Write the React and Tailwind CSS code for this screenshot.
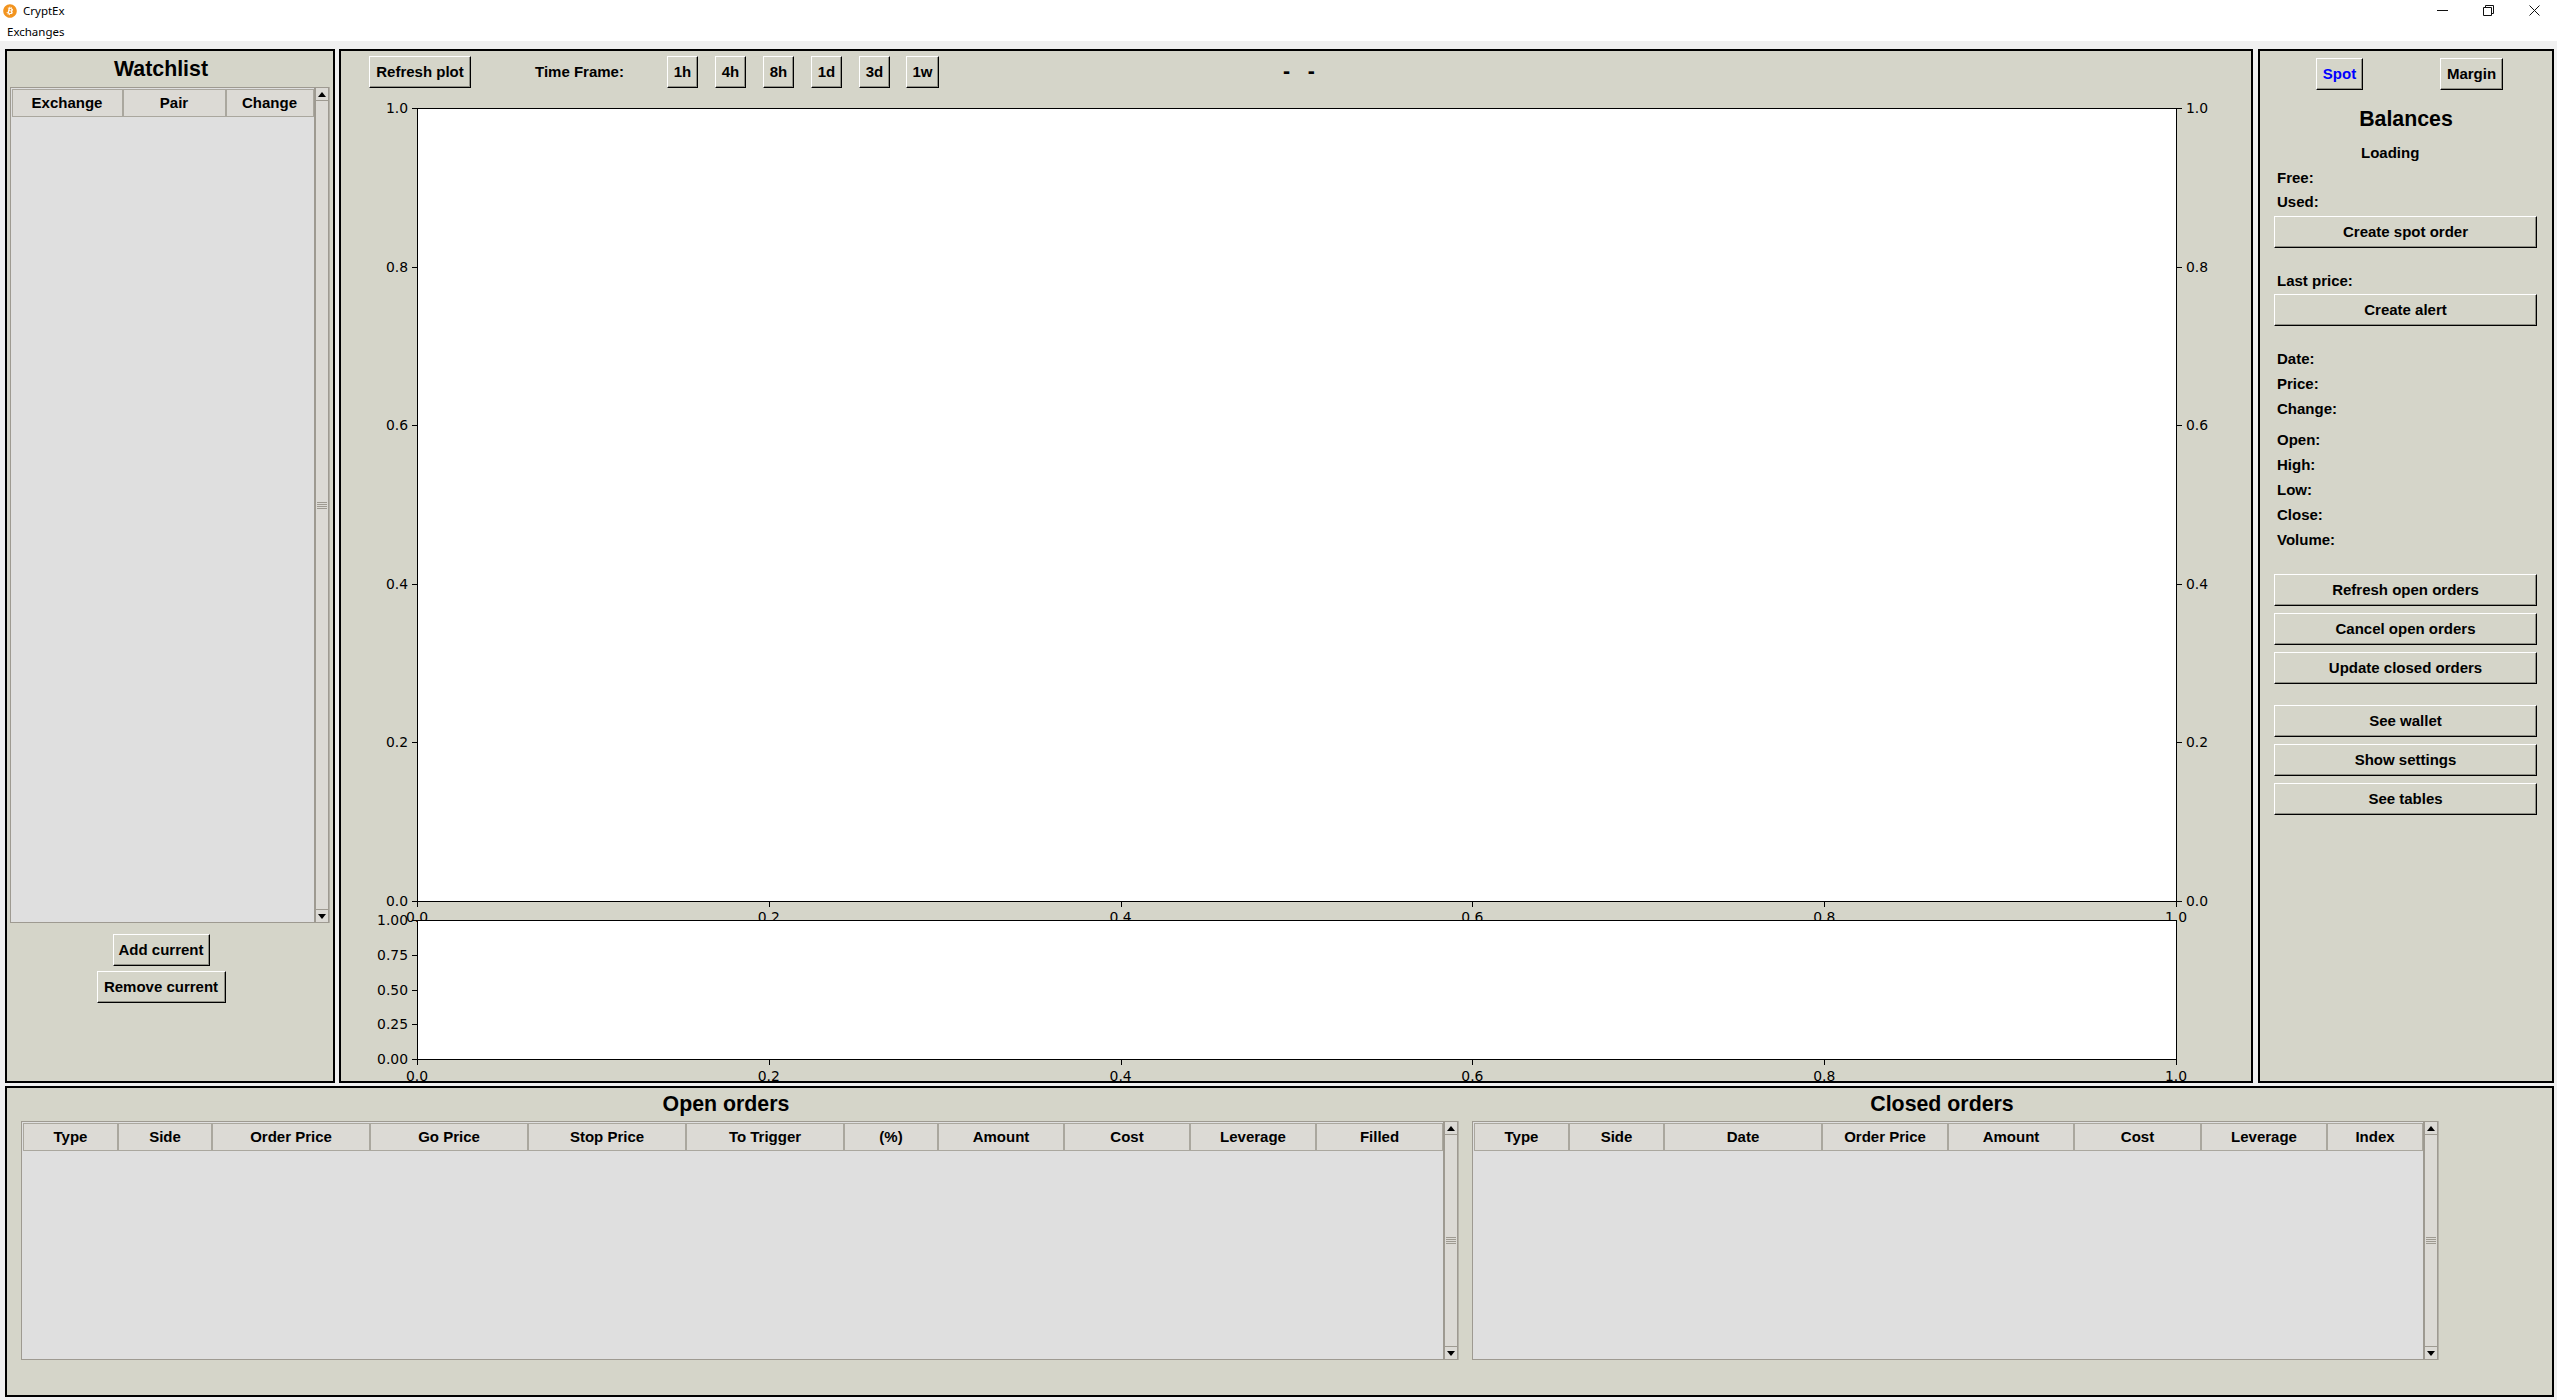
import React from 'react';
import { FaBitcoin } from 'react-icons/fa';

const xTicks = ['0.0', '0.2', '0.4', '0.6', '0.8', '1.0'];
const AX_L = 76;
const AX_R = 1835;
const P1_T = 16;
const P1_B = 809;
const P2_T = 828;
const P2_B = 967;

const openCols = [
  ['Type', 95], ['Side', 94], ['Order Price', 158], ['Go Price', 158], ['Stop Price', 158],
  ['To Trigger', 158], ['(%)', 94], ['Amount', 126], ['Cost', 126], ['Leverage', 126], ['Filled', 127],
];
const closedCols = [
  ['Type', 95], ['Side', 95], ['Date', 158], ['Order Price', 126], ['Amount', 126],
  ['Cost', 127], ['Leverage', 126], ['Index', 96],
];
const watchCols = [['Exchange', 111], ['Pair', 103], ['Change', 88]];

const Btn = ({ children, className = '' }) => (
  <button className={`flex items-center justify-center h-[32px] whitespace-nowrap bg-[#d5d5c9] border border-t-white border-l-white border-r-black border-b-black shadow-[inset_-1px_-1px_0_#8f8f85] font-bold text-[15px] text-black ${className}`}>
    {children}
  </button>
);

const Row = ({ children, className = 'h-[25px]' }) => (
  <div className={`flex items-center pl-[17px] font-bold text-[15px] text-black ${className}`}>{children}</div>
);

const Arrow = ({ up }) => (
  <div className="flex items-center justify-center w-[14px] h-[14px] shrink-0 bg-[#dcdad5] border border-[#9e9a91]">
    <svg width="8" height="5" viewBox="0 0 8 5">
      <path d={up ? 'M4 0 L8 5 L0 5 Z' : 'M0 0 L8 0 L4 5 Z'} fill="#000" />
    </svg>
  </div>
);

const Scrollbar = () => (
  <div className="flex flex-col w-[15px] shrink-0 bg-[#dcdad5] border-r border-[#b4b1a8]">
    <Arrow up />
    <div className="flex-1 flex flex-col justify-center items-center gap-[1px] border-x border-[#9e9a91] bg-[#dcdad5]">
      <div className="w-[10px] h-[1px] bg-[#9e9a91]" />
      <div className="w-[10px] h-[1px] bg-[#9e9a91]" />
      <div className="w-[10px] h-[1px] bg-[#9e9a91]" />
      <div className="w-[10px] h-[1px] bg-[#9e9a91]" />
    </div>
    <Arrow />
  </div>
);

const Tree = ({ cols, className = '' }) => (
  <div className={`flex ${className}`}>
    <div className="flex-1 bg-[#dfdfdf] border border-[#9e9a91] pt-[1px] pl-[1px]">
      <div className="flex h-[28px]">
        {cols.map(([name, w]) => (
          <div
            key={name}
            style={{ width: w }}
            className="flex items-center justify-center shrink-0 bg-[#dcdad5] border border-[#aaa79e] font-bold text-[15px] text-black"
          >
            {name}
          </div>
        ))}
      </div>
    </div>
    <Scrollbar />
  </div>
);

const Chart = () => (
  <svg width="1910" height="989" className="block font-['DejaVu_Sans'] text-[13.9px]">
    {/* main plot */}
    <rect x={AX_L + 0.5} y={P1_T + 0.5} width={AX_R - AX_L} height={P1_B - P1_T} fill="#fff" stroke="#000" />
    {xTicks.map((t, i) => {
      const y = P1_B - (i * (P1_B - P1_T)) / 5;
      const ty = Math.round(y) + 0.5;
      return (
        <g key={t}>
          <path d={`M${AX_L - 5} ${ty} H${AX_L} M${AX_R} ${ty} H${AX_R + 6}`} stroke="#000" />
          <text x={AX_L - 9} y={y + 5} textAnchor="end">{t}</text>
          <text x={AX_R + 10} y={y + 5}>{t}</text>
        </g>
      );
    })}
    {xTicks.map((t, i) => {
      const x = AX_L + (i * (AX_R - AX_L)) / 5;
      return (
        <g key={t}>
          <path d={`M${Math.round(x) + 0.5} ${P1_B} v6`} stroke="#000" />
          <text x={x} y={P1_B + 21} textAnchor="middle">{t}</text>
        </g>
      );
    })}
    {/* volume plot */}
    <rect x={AX_L + 0.5} y={P2_T + 0.5} width={AX_R - AX_L} height={P2_B - P2_T} fill="#fff" stroke="#000" />
    {['0.00', '0.25', '0.50', '0.75', '1.00'].map((t, i) => {
      const y = P2_B - (i * (P2_B - P2_T)) / 4;
      return (
        <g key={t}>
          <path d={`M${AX_L - 5} ${Math.round(y) + 0.5} H${AX_L}`} stroke="#000" />
          <text x={AX_L - 9} y={y + 5} textAnchor="end">{t}</text>
        </g>
      );
    })}
    {xTicks.map((t, i) => {
      const x = AX_L + (i * (AX_R - AX_L)) / 5;
      return (
        <g key={t}>
          <path d={`M${Math.round(x) + 0.5} ${P2_B} v6`} stroke="#000" />
          <text x={x} y={P2_B + 22} textAnchor="middle">{t}</text>
        </g>
      );
    })}
  </svg>
);

export default function App() {
  return (
    <div className="flex flex-col h-[1400px] w-full overflow-hidden bg-[#f0f0f0] font-['Liberation_Sans',Arial,sans-serif] text-black">
      {/* Title bar */}
      <div className="flex items-center h-[22px] bg-white pl-[3px] font-['Noto_Sans',sans-serif] text-[11.5px]">
        <FaBitcoin className="w-[14px] h-[14px] text-[#f2941f]" />
        <span className="ml-[6px]">CryptEx</span>
        <div className="ml-auto flex items-center gap-[35px] pr-[17px] mb-[2px]">
          <svg width="11" height="11" viewBox="0 0 11 11"><path d="M0 5.5 H11" stroke="#111" /></svg>
          <svg width="11" height="11" viewBox="0 0 11 11" fill="none" stroke="#111"><path d="M0.5 2.5 H8.5 V10.5 H0.5 Z M2.5 2.5 V0.5 H10.5 V8.5 H8.5" /></svg>
          <svg width="11" height="11" viewBox="0 0 11 11" stroke="#111"><path d="M0.5 0.5 L10.5 10.5 M10.5 0.5 L0.5 10.5" /></svg>
        </div>
      </div>
      {/* Menu */}
      <div className="flex items-center h-[19px] bg-white pl-[7px] pt-[1px] font-['Noto_Sans',sans-serif] text-[11.5px]">Exchanges</div>

      <div className="flex flex-col gap-[3px] pt-[8px] pl-[5px]">
        <div className="flex h-[1034px]">
          {/* Watchlist */}
          <div className="flex flex-col items-center w-[330px] bg-[#d5d5c9] border-2 border-black">
            <div className="flex items-center justify-center h-[36px] pt-[2px] mr-[18px] font-bold text-[21.33px]">Watchlist</div>
            <Tree cols={watchCols} className="w-[320px] h-[836px] mr-[1px]" />
            <Btn className="w-[97px] mt-[11px] mr-[18px]">Add current</Btn>
            <Btn className="w-[129px] mt-[5px] mr-[18px]">Remove current</Btn>
          </div>

          {/* Chart */}
          <div className="flex flex-col w-[1914px] ml-[4px] bg-[#d5d5c9] border-2 border-black overflow-hidden">
            <div className="flex items-center h-[37px] pt-[5px]">
              <Btn className="w-[102px] ml-[28px]">Refresh plot</Btn>
              <span className="ml-[64px] font-bold text-[15px]">Time Frame:</span>
              <Btn className="w-[31px] ml-[43px]">1h</Btn>
              <Btn className="w-[31px] ml-[17px]">4h</Btn>
              <Btn className="w-[31px] ml-[17px]">8h</Btn>
              <Btn className="w-[31px] ml-[17px]">1d</Btn>
              <Btn className="w-[31px] ml-[17px]">3d</Btn>
              <Btn className="w-[33px] ml-[16px]">1w</Btn>
              <span className="ml-[344px] font-bold text-[21.33px] whitespace-pre">-   -</span>
            </div>
            <div className="mt-[4px]"><Chart /></div>
          </div>

          {/* Balances */}
          <div className="flex flex-col w-[296px] ml-[5px] bg-[#d5d5c9] border-2 border-black">
            <div className="flex pt-[7px] pl-[56px]">
              <Btn className="w-[47px] !text-[#0000ff]">Spot</Btn>
              <Btn className="w-[63px] ml-[77px]">Margin</Btn>
            </div>
            <div className="flex items-center justify-center h-[30px] mt-[15px] font-bold text-[21.33px]">Balances</div>
            <Row className="h-[25px] mt-[6px] !pl-[101px]">Loading</Row>
            <Row className="h-[24px]">Free:</Row>
            <Row className="h-[25px]">Used:</Row>
            <Btn className="w-[263px] ml-[14px] mt-[1px]">Create spot order</Btn>
            <Row className="h-[24px] mt-[21px]">Last price:</Row>
            <Btn className="w-[263px] ml-[14px] mt-[1px]">Create alert</Btn>
            <Row className="h-[25px] mt-[21px]">Date:</Row>
            <Row>Price:</Row>
            <Row>Change:</Row>
            <Row className="h-[25px] mt-[6px]">Open:</Row>
            <Row>High:</Row>
            <Row>Low:</Row>
            <Row>Close:</Row>
            <Row>Volume:</Row>
            <Btn className="w-[263px] ml-[14px] mt-[21px]">Refresh open orders</Btn>
            <Btn className="w-[263px] ml-[14px] mt-[7px]">Cancel open orders</Btn>
            <Btn className="w-[263px] ml-[14px] mt-[7px]">Update closed orders</Btn>
            <Btn className="w-[263px] ml-[14px] mt-[21px]">See wallet</Btn>
            <Btn className="w-[263px] ml-[14px] mt-[7px]">Show settings</Btn>
            <Btn className="w-[263px] ml-[14px] mt-[7px]">See tables</Btn>
          </div>
        </div>

        {/* Orders */}
        <div className="flex h-[311px] w-[2549px] bg-[#d5d5c9] border-2 border-black pl-[14px]">
          <div className="flex flex-col w-[1438px]">
            <div className="flex items-center justify-center h-[33px] pr-[28px] font-bold text-[21.33px]">Open orders</div>
            <Tree cols={openCols} className="h-[239px]" />
          </div>
          <div className="flex flex-col w-[967px] ml-[13px]">
            <div className="flex items-center justify-center h-[33px] pr-[27px] font-bold text-[21.33px]">Closed orders</div>
            <Tree cols={closedCols} className="h-[239px]" />
          </div>
        </div>
      </div>
    </div>
  );
}
